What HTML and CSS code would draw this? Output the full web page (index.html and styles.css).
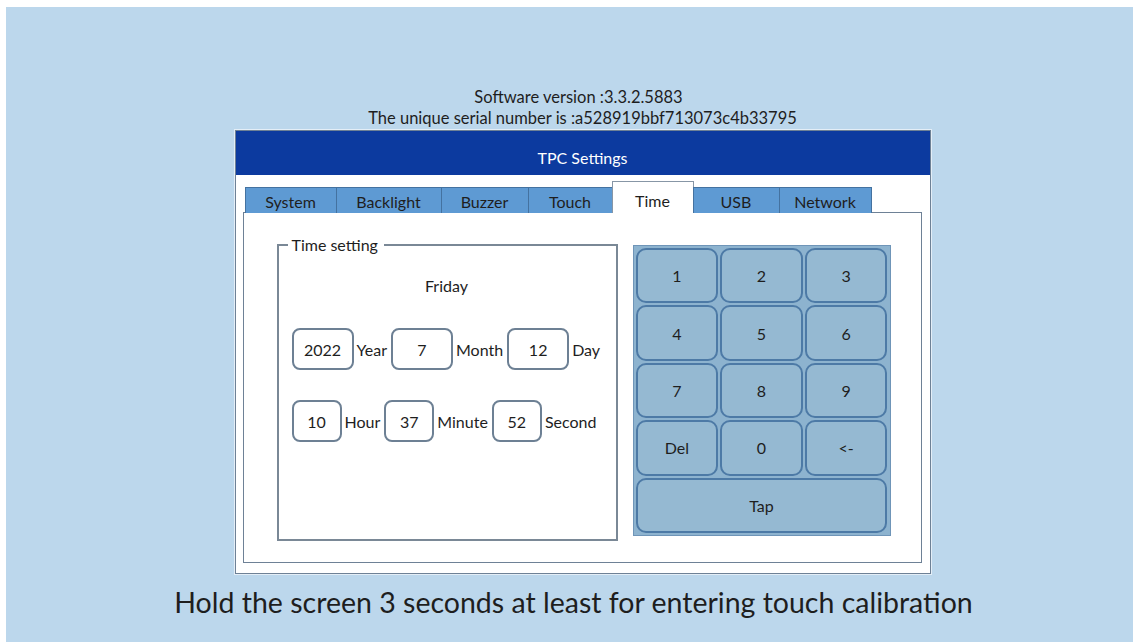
FILE: index.html
```html
<!DOCTYPE html>
<html lang="en">
<head>
    <meta charset="UTF-8">
    <meta name="viewport" content="width=device-width, initial-scale=1.0">
    <title>TPC Settings</title>
    <link rel="stylesheet" href="styles.css">
</head>
<body>
    <div class="screen">
        <div class="info">Software version :3.3.2.5883</div>
        <div class="info serial">The unique serial number is :a528919bbf713073c4b33795</div>

        <div class="panel">
            <div class="panel-header">TPC Settings</div>
            <div class="panel-body">
                <div class="tabs">
                    <div class="tab" style="width: 92px">System</div>
                    <div class="tab" style="width: 106px">Backlight</div>
                    <div class="tab" style="width: 88px">Buzzer</div>
                    <div class="tab" style="width: 85px">Touch</div>
                    <div class="tab active" style="width: 82px">Time</div>
                    <div class="tab" style="width: 87px">USB</div>
                    <div class="tab" style="width: 93px">Network</div>
                </div>
                <div class="tab-content">
                    <fieldset class="time-box">
                        <legend>Time setting</legend>
                        <div class="weekday">Friday</div>
                        <div class="field-row">
                            <div class="field wide">2022</div><span class="unit">Year</span>
                            <div class="field wide">7</div><span class="unit">Month</span>
                            <div class="field wide">12</div><span class="unit">Day</span>
                        </div>
                        <div class="field-row second">
                            <div class="field">10</div><span class="unit">Hour</span>
                            <div class="field">37</div><span class="unit">Minute</span>
                            <div class="field">52</div><span class="unit">Second</span>
                        </div>
                    </fieldset>

                    <div class="keypad">
                        <div class="key">1</div>
                        <div class="key">2</div>
                        <div class="key">3</div>
                        <div class="key">4</div>
                        <div class="key">5</div>
                        <div class="key">6</div>
                        <div class="key">7</div>
                        <div class="key">8</div>
                        <div class="key">9</div>
                        <div class="key">Del</div>
                        <div class="key">0</div>
                        <div class="key">&lt;-</div>
                        <div class="key tap">Tap</div>
                    </div>
                </div>
            </div>
        </div>

        <div class="hint">Hold the screen 3 seconds at least for entering touch calibration</div>
    </div>
</body>
</html>
```

FILE: styles.css
```css
* {
    margin: 0;
    padding: 0;
    box-sizing: border-box;
}
html, body {
    height: 100%;
}
body {
    background-color: #ffffff;
    padding: 7px 2px 0 6px;
    font-family: 'Lato', 'Open Sans', sans-serif;
    color: #1e1e1e;
}
.screen {
    height: 100%;
    background-color: #bcd7ec;
    display: flex;
    flex-direction: column;
    align-items: center;
    padding-top: 80px;
}
.info {
    font-size: 16.5px;
    line-height: 20px;
    margin-left: 18px;
}
.serial {
    margin-top: 1px;
    margin-left: 26px;
}
/* Settings window */
.panel {
    width: 696px;
    margin-top: 2px;
    margin-left: 26px;
    border: 1px solid #6e8196;
    background-color: #ffffff;
    box-shadow: 0 0 0 1px #e4eef7;
}
.panel-header {
    height: 44px;
    background-color: #0c3a9f;
    color: #ffffff;
    font-size: 16px;
    text-align: center;
    padding-top: 17px;
}
.panel-body {
    padding: 6px 8px 10px 7px;
}
.tabs {
    display: flex;
    align-items: flex-end;
    height: 32px;
    padding-left: 2px;
    margin-bottom: -1px;
    position: relative;
    z-index: 1;
}
.tab {
    height: 26px;
    background-color: #5e9ad3;
    border: 1px solid #4472a0;
    border-bottom: none;
    margin-right: -1px;
    text-align: center;
    font-size: 16px;
    line-height: 27px;
}
.tab.active {
    height: 32px;
    background-color: #ffffff;
    border-color: #8796a6;
    line-height: 38px;
}
.tab-content {
    display: flex;
    border: 1px solid #6e8196;
    height: 351px;
    padding: 30px 30px 0 33px;
}
/* Time fields */
.time-box {
    width: 341px;
    height: 306px;
    border: 2px solid #7a8896;
    padding: 0 0 0 13px;
    margin-top: -8px;
}
.time-box legend {
    margin-left: -4px;
    padding: 0 6px 0 4px;
    font-size: 16px;
    line-height: 20px;
}
.weekday {
    text-align: center;
    font-size: 16px;
    line-height: 20px;
    margin-top: 21px;
    padding-right: 14px;
}
.field-row {
    display: flex;
    align-items: center;
    margin-top: 32px;
    font-size: 16px;
}
.field-row.second {
    margin-top: 30px;
}
.field {
    width: 50px;
    height: 42px;
    border: 2px solid #6d8094;
    border-radius: 8px;
    display: flex;
    align-items: center;
    justify-content: center;
}
.field.wide {
    width: 62px;
}
.unit {
    padding: 0 3px;
    margin-right: 1px;
}
/* Keypad */
.keypad {
    width: 258px;
    height: 291px;
    margin-left: 15px;
    margin-top: 2px;
    background-color: #8db3cf;
    border: 1px solid #6f95b8;
    padding: 2px;
    display: grid;
    grid-template-columns: 1fr 1fr 1fr;
    grid-template-rows: repeat(5, 1fr);
    gap: 2px;
}
.key {
    background-color: #95b9d2;
    border: 2px solid #4d7aa6;
    border-radius: 10px;
    display: flex;
    align-items: center;
    justify-content: center;
    font-size: 16px;
}
.key.tap {
    grid-column: 1 / 4;
}
.hint {
    margin-top: 11px;
    font-size: 28.5px;
    margin-left: 8px;
}
```
